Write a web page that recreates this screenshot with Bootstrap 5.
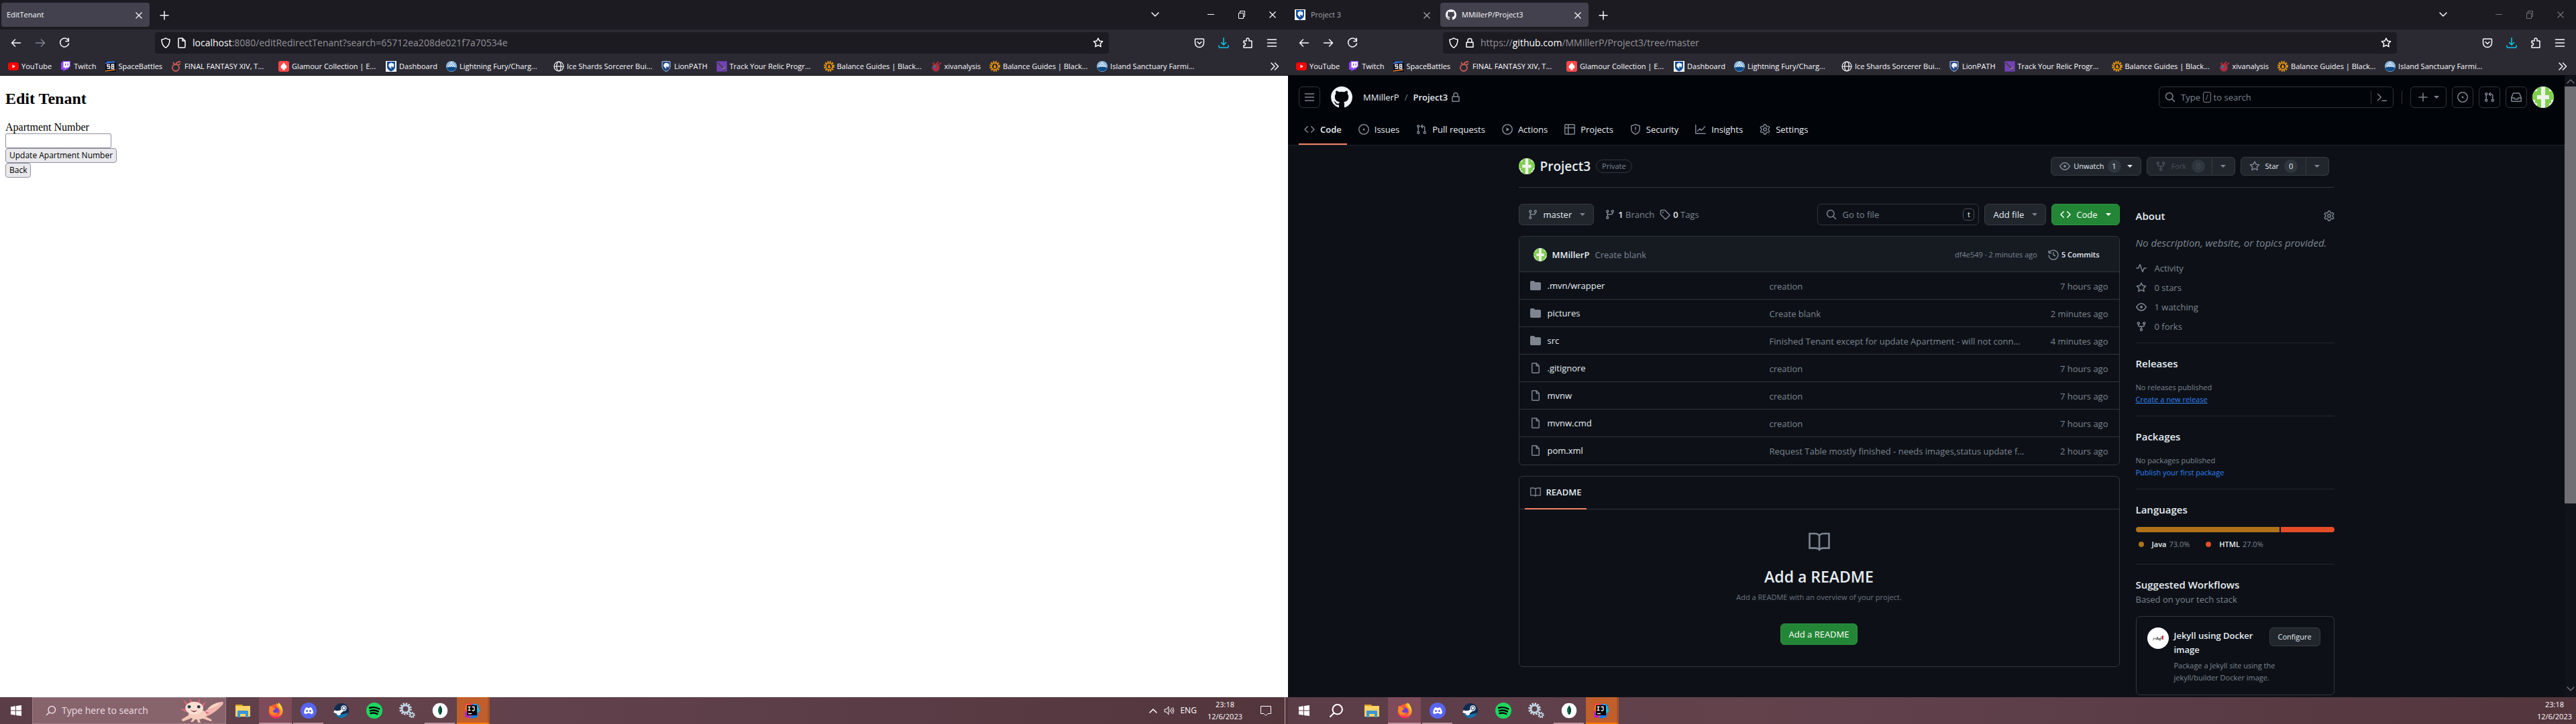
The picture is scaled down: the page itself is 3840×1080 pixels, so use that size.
<!DOCTYPE html>
<html lang="en" data-bs-theme="light">
<head>
<meta charset="utf-8">
<meta name="viewport" content="width=device-width, initial-scale=1">
<title>Desktop</title>
<link rel="stylesheet" href="https://cdn.jsdelivr.net/npm/bootstrap@5.3.0/dist/css/bootstrap.min.css">
<script src="https://cdn.jsdelivr.net/npm/bootstrap@5.3.0/dist/js/bootstrap.bundle.min.js"></script>
<style>
:root{--line:#30363d;--muted:#7d8590;--fg:#e6edf3;--page:#0d1117}
body{font-family:"Open Sans","Noto Sans",sans-serif;font-size:13px;line-height:20px;background:#0d1117}
.ic{width:16px;height:16px;flex:none;fill:currentColor;stroke:none}
.ln{fill:none;stroke:currentColor;stroke-width:1.5;stroke-linecap:round;stroke-linejoin:round}
.flip-y{transform:scaleY(-1)}
.flip-x{transform:scaleX(-1)}
a{text-decoration:none;color:inherit}
button{font:inherit;color:inherit;background:none;border:0;padding:0}
.screen{height:100vh;min-width:0;overflow:hidden}
.screen+.screen .winctl{color:#737278}
/* browser window */
.tabstrip{height:44px;flex:none;background:#1c1b22;color:#fbfbfe;padding-left:2px;padding-right:15px;font-size:11px}
.tab-item{width:221px;height:36px;padding:0 8px;border-radius:4px;margin-right:4px}
.tab-item.current{background:#42414d}
.tab-item.idle{color:#a7a6ad}
.newtab{width:36px;height:36px}
.winctl{gap:30px;margin-left:67px}
.toolbar-row{height:40px;flex:none;background:#2b2a33;color:#fbfbfe;padding:0 16px}
.navbtns,.extras{gap:20px}
.urlbar{background:#1c1b22;border-radius:4px;height:32px;flex:1;padding:0 8px;font-size:14px;color:#94939a;margin:0 127px}
.urlbar b{font-weight:400;color:#fbfbfe}
.marks-row{height:29px;flex:none;background:#2b2a33;color:#fbfbfe;font-size:11px;padding:2px 12px 0;border-bottom:1px solid #0c0c0d}
.bm{padding-right:13px;white-space:nowrap}
.bm.wide{width:160px}
.bm .ic{margin-right:4px}
/* tenant form page */
.tenant{background:#fff;color:#000;font-family:"Liberation Serif",serif;font-size:16px;line-height:18px;padding:20px 8px}
.tenant h2{font-size:24px;line-height:28px;font-weight:700;margin:0 0 20px}
.tenant input{width:158px;height:22px;border:1px solid #8f8f9d;border-radius:2px;padding:0 4px;font-size:13px}
.tenant button{height:22px;border:1px solid #8f8f9d;border-radius:4px;background:#e9e9ed;font:12px/18px "Open Sans",sans-serif;padding:0 5px}
/* repository page */
.gh{background:var(--page);color:var(--fg);overflow:hidden}
.ghtop{background:#010409;border-bottom:1px solid #21262d;padding:16px 16px 0}
.sqbtn{width:32px;height:32px;border:1px solid var(--line);border-radius:6px;color:var(--muted);display:inline-flex;align-items:center;justify-content:center}
.sqbtn.plus{width:54px;gap:8px}
.avatar-pic{border-radius:50%;flex:none}
.searchbox{width:350px;height:32px;border:1px solid var(--line);border-radius:6px;color:var(--muted);padding:0 8px}
.slash{border:1px solid var(--muted);border-radius:3px;line-height:14px;padding:0 3px;font-size:10px;margin:0 4px}
.vr-line{width:1px;height:20px;background:var(--line)}
.vr-line.apart{margin:0 12px}
.caret{border:4px solid transparent;border-top-color:currentColor;border-bottom:0;flex:none}
.caret.dim{color:var(--muted)}
.repotabs{gap:9px;margin-top:17px}
.repotabs a{height:38px;padding:0 8px 6px;gap:8px;display:flex;align-items:center;border-bottom:2px solid transparent}
.repotabs a.current{border-color:#f78166;font-weight:600}
.repotabs .ic{color:var(--muted)}
.wrapcol{max-width:1280px;padding:0 32px;margin:0 auto}
.repohead{height:63px;padding:0 8px 0 0;border-bottom:1px solid var(--line)}
.repohead h1{font-size:19px;line-height:30px;font-weight:600;margin:0 8px}
.pill{border:1px solid var(--line);border-radius:10px;font-size:11px;line-height:18px;padding:0 8px;color:var(--muted)}
.gbtn{display:inline-flex;align-items:center;background:#21262d;border:1px solid #363b42;border-radius:6px;height:32px;padding:0 12px;white-space:nowrap;gap:8px;font-weight:500}
.gbtn.small-h{height:28px;font-size:11px;padding:0 12px}
.gbtn.tight{gap:5px}
.gbtn .ic{color:var(--muted)}
.gbtn.green{background:#238636;border-color:#2f9142;color:#fff}
.gbtn.green .ic{color:#fff}
.num{background:#30363d;border-radius:10px;min-width:20px;height:20px;text-align:center}
.off,.off .ic{color:#484f58}
.gbtn.splitl{border-radius:6px 0 0 6px;width:98px}
.gbtn.splitr{border-radius:0 6px 6px 0;border-left:0;width:34px}
.muted-t{color:var(--muted)}
.fine{font-size:11px}
.gofile{width:241px;height:32px;border:1px solid var(--line);border-radius:6px;padding:0 6px 0 12px;color:var(--muted)}
.gofile input{background:none;border:0;outline:0;flex:1;min-width:0;font-size:13px;color:var(--fg);padding:0 8px}
.gofile input::placeholder{color:var(--muted);opacity:1}
.keycap{border:1px solid #484f58;border-radius:5px;width:17px;height:18px;line-height:15px;text-align:center;font-size:11px;color:var(--fg)}
.boxed{border:1px solid var(--line);border-radius:6px}
.side{width:296px;flex:none}
.filetable{width:100%;table-layout:fixed}
.filetable .c-name{width:373px}
.filetable .c-age{width:140px}
.filetable td{height:41px;border-top:1px solid var(--line);padding:2px 0 0;vertical-align:middle;white-space:nowrap;overflow:hidden}
.filetable .ic{color:var(--muted);margin:0 10px 4px 16px}
.commitbar{height:52px;background:#161b22;border-radius:6px 6px 0 0;padding:2px 29px 0 21px}
.boxtab{height:49px;border-bottom:1px solid var(--line);padding-left:8px}
.boxtab a{height:49px;border-bottom:2px solid #f78166;padding:0 8px;gap:8px;font-weight:600}
.noreadme{padding:32px 0}
.noreadme h3{font-size:23px;line-height:36px;font-weight:600;margin:18px 0 4px}
.noreadme p{font-size:11px;line-height:18px;color:#6e7681;margin:0 0 30px}
.side h2{font-size:15px;line-height:24px;font-weight:600;margin:0}
.abouthead{height:36px}
.aboutdesc{font-size:15px;line-height:24px;margin:10px 0 11px}
.facts{margin:0 0 10px}
.facts li{height:29px;gap:12px}
.side section{border-top:1px solid #21262d;padding:18px 0 15px}
.side section p{font-size:11px;line-height:18px;margin:0;color:var(--muted)}
.side h2.spaced,.basedon{margin-bottom:15px}
.side .bl{color:#2f81f7}
.bar{height:8px;gap:2px;border-radius:6px;overflow:hidden;margin:14px 0 8px}
.dot{width:8px;height:8px;border-radius:50%}
.java{background:#b07219}
.html5{background:#e34c26}
.flow h4{font-size:13px;line-height:21px;width:142px;padding-top:2px;font-weight:600;margin:0}
.scroller{width:17px;background:#10131a;flex:none;color:#6f6f74}
.scroller .thumb{height:622px;background:#6f6f74}
/* taskbar */
.taskbar{height:40px;background:linear-gradient(90deg,#5b3d47,#63424c 35%,#5c3e49 60%,#53353c);color:#fff;flex:none}
.start{width:48px;height:40px}
.winsearch{width:289px;height:40px;background:#87636c;border:1px solid #9d7f87;font-size:14px;padding-left:19px;color:#ecdfe2}
.app{width:49px;height:40px;border-bottom:2px solid transparent;padding-top:2px}
.app .ic{width:24px;height:24px}
.app.run{border-image:linear-gradient(90deg,transparent 4px,#bb929b 4px,#bb929b 45px,transparent 45px) 2}
.app.active{background:#7d4b59;border-bottom-color:#bb929b}
.app.ij{background:#c05f2b;border-bottom-color:#ff7b00;border-right:3px solid #a65228;margin-left:1px}
.tray{gap:8px;font-size:12px}
.clock{font-size:11px;line-height:18px;text-align:center;margin:0 18px 0 8px}
.clock.last{margin-right:6px}
.showdesk{border-left:1px solid #b7a2a7;height:40px;width:5px;margin-left:11px}
</style>
</head>
<body>
<svg width="0" height="0" class="d-none" aria-hidden="true">
<symbol id="code" viewBox="0 0 16 16"><path d="m11.28 3.22 4.25 4.25a.75.75 0 0 1 0 1.06l-4.25 4.25a.749.749 0 0 1-1.275-.326.749.749 0 0 1 .215-.734L13.94 8l-3.72-3.72a.749.749 0 0 1 .326-1.275.749.749 0 0 1 .734.215Zm-6.56 0a.751.751 0 0 1 1.042.018.751.751 0 0 1 .018 1.042L2.06 8l3.72 3.72a.749.749 0 0 1-.326 1.275.749.749 0 0 1-.734-.215L.47 8.53a.75.75 0 0 1 0-1.06Z"/></symbol>
<symbol id="gh" viewBox="0 0 16 16"><path d="M8 0c4.42 0 8 3.58 8 8a8.013 8.013 0 0 1-5.45 7.59c-.4.08-.55-.17-.55-.38 0-.27.01-1.13.01-2.2 0-.75-.25-1.23-.54-1.48 1.78-.2 3.65-.88 3.65-3.95 0-.88-.31-1.59-.82-2.15.08-.2.36-1.02-.08-2.12 0 0-.67-.22-2.2.82-.64-.18-1.32-.27-2-.27-.68 0-1.36.09-2 .27-1.53-1.03-2.2-.82-2.2-.82-.44 1.1-.16 1.92-.08 2.12-.51.56-.82 1.28-.82 2.15 0 3.06 1.86 3.75 3.64 3.95-.23.2-.44.55-.51 1.07-.46.21-1.61.55-2.33-.66-.15-.24-.6-.83-1.23-.82-.67.01-.27.38.01.53.34.19.73.9.82 1.13.16.45.68 1.31 2.69.94 0 .67.01 1.3.01 1.49 0 .21-.15.45-.55.38A7.995 7.995 0 0 1 0 8c0-4.42 3.58-8 8-8Z"/></symbol>
<symbol id="gear" viewBox="0 0 16 16"><path d="M8 0a8.2 8.2 0 0 1 .701.031C9.444.095 9.99.645 10.16 1.29l.288 1.107c.018.066.079.158.212.224.231.114.454.243.668.386.123.082.233.09.299.071l1.103-.303c.644-.176 1.392.021 1.82.63.27.385.506.792.704 1.218.315.675.111 1.422-.364 1.891l-.814.806c-.049.048-.098.147-.088.294.016.257.016.515 0 .772-.01.147.038.246.088.294l.814.806c.475.469.679 1.216.364 1.891a7.977 7.977 0 0 1-.704 1.217c-.428.61-1.176.807-1.82.63l-1.102-.302c-.067-.019-.177-.011-.3.071a5.909 5.909 0 0 1-.668.386c-.133.066-.194.158-.211.224l-.29 1.106c-.168.646-.715 1.196-1.458 1.26a8.006 8.006 0 0 1-1.402 0c-.743-.064-1.289-.614-1.458-1.26l-.289-1.106c-.018-.066-.079-.158-.212-.224a5.738 5.738 0 0 1-.668-.386c-.123-.082-.233-.09-.299-.071l-1.103.303c-.644.176-1.392-.021-1.82-.63a8.12 8.12 0 0 1-.704-1.218c-.315-.675-.111-1.422.363-1.891l.815-.806c.05-.048.098-.147.088-.294a6.214 6.214 0 0 1 0-.772c.01-.147-.038-.246-.088-.294l-.815-.806C.635 6.045.431 5.298.746 4.623a7.92 7.92 0 0 1 .704-1.217c.428-.61 1.176-.807 1.82-.63l1.102.302c.067.019.177.011.3-.071.214-.143.437-.272.668-.386.133-.066.194-.158.211-.224l.29-1.106C6.009.645 6.556.095 7.299.03 7.53.01 7.764 0 8 0Zm-.571 1.525c-.036.003-.108.036-.137.146l-.289 1.105c-.147.561-.549.967-.998 1.189-.173.086-.34.183-.5.29-.417.278-.97.423-1.529.27l-1.103-.303c-.109-.03-.175.016-.195.045-.22.312-.412.644-.573.99-.014.031-.021.11.059.19l.815.806c.411.406.562.957.53 1.456a4.709 4.709 0 0 0 0 .582c.032.499-.119 1.05-.53 1.456l-.815.806c-.081.08-.073.159-.059.19.162.346.353.677.573.989.02.03.085.076.195.046l1.102-.303c.56-.153 1.113-.008 1.53.27.161.107.328.204.501.29.447.222.85.629.997 1.189l.289 1.105c.029.109.101.143.137.146a6.6 6.6 0 0 0 1.142 0c.036-.003.108-.036.137-.146l.289-1.105c.147-.561.549-.967.998-1.189.173-.086.34-.183.5-.29.417-.278.97-.423 1.529-.27l1.103.303c.109.029.175-.016.195-.045.22-.313.411-.644.573-.99.014-.031.021-.11-.059-.19l-.815-.806c-.411-.406-.562-.957-.53-1.456a4.709 4.709 0 0 0 0-.582c-.032-.499.119-1.05.53-1.456l.815-.806c.081-.08.073-.159.059-.19a6.464 6.464 0 0 0-.573-.989c-.02-.03-.085-.076-.195-.046l-1.102.303c-.56.153-1.113.008-1.53-.27a4.44 4.44 0 0 0-.501-.29c-.447-.222-.85-.629-.997-1.189l-.289-1.105c-.029-.11-.101-.143-.137-.146a6.6 6.6 0 0 0-1.142 0ZM11 8a3 3 0 1 1-6 0 3 3 0 0 1 6 0ZM9.5 8a1.5 1.5 0 1 0-3.001.001A1.5 1.5 0 0 0 9.5 8Z"/></symbol>
<symbol id="star" viewBox="0 0 16 16"><path d="M8 .25a.75.75 0 0 1 .673.418l1.882 3.815 4.21.612a.75.75 0 0 1 .416 1.279l-3.046 2.97.719 4.192a.751.751 0 0 1-1.088.791L8 12.347l-3.766 1.98a.75.75 0 0 1-1.088-.79l.72-4.194L.818 6.374a.75.75 0 0 1 .416-1.28l4.21-.611L7.327.668A.75.75 0 0 1 8 .25Zm0 2.445L6.615 5.5a.75.75 0 0 1-.564.41l-3.097.45 2.24 2.184a.75.75 0 0 1 .216.664l-.528 3.084 2.769-1.456a.75.75 0 0 1 .698 0l2.77 1.456-.53-3.084a.75.75 0 0 1 .216-.664l2.24-2.183-3.096-.45a.75.75 0 0 1-.564-.41L8 2.694Z"/></symbol>
<symbol id="folder" viewBox="0 0 16 16"><path d="M1.75 1A1.75 1.75 0 0 0 0 2.75v10.5C0 14.216.784 15 1.75 15h12.5A1.75 1.75 0 0 0 16 13.25v-8.5A1.75 1.75 0 0 0 14.25 3H7.5a.25.25 0 0 1-.2-.1l-.9-1.2C6.07 1.26 5.55 1 5 1H1.75Z"/></symbol>
<symbol id="file" viewBox="0 0 16 16"><path class="ln" d="M3.75.75h5.5l4 4v9.5a1 1 0 0 1-1 1h-8.5a1 1 0 0 1-1-1V1.75a1 1 0 0 1 1-1ZM9.25 1v3.75h3.75"/></symbol>
<symbol id="issue" viewBox="0 0 16 16"><circle class="ln" cx="8" cy="8" r="7.25"/><circle cx="8" cy="8" r="1.5"/></symbol>
<symbol id="pr" viewBox="0 0 16 16"><g class="ln"><circle cx="3.25" cy="3.25" r="1.5"/><circle cx="3.25" cy="12.75" r="1.5"/><circle cx="12.75" cy="12.75" r="1.5"/><path d="M3.25 5v6M12.75 11V5.5a2 2 0 0 0-2-2H7.5M9.5 1.2 7.2 3.5l2.3 2.3"/></g></symbol>
<symbol id="play" viewBox="0 0 16 16"><circle class="ln" cx="8" cy="8" r="7.25"/><path d="M6.4 5v6l4.800-3z"/></symbol>
<symbol id="project" viewBox="0 0 16 16"><path class="ln" d="M.75 1.75a1 1 0 0 1 1-1h12.500a1 1 0 0 1 1 1v12.500a1 1 0 0 1-1 1H1.750a1 1 0 0 1-1-1ZM.75 5.750h14.500M5.750.75v14.500"/></symbol>
<symbol id="shield" viewBox="0 0 16 16"><path class="ln" d="M8 .8 14.200 2.700V7.500c0 3.700-2.200 6.200-6.200 7.700C4 13.700 1.800 11.200 1.800 7.500V2.700ZM8 4.700v3.500M8 11v.1"/></symbol>
<symbol id="graph" viewBox="0 0 16 16"><path class="ln" d="M.75 1.500v12.750h14.500M3.500 10.500 7 7l2.500 2.500L14.500 4"/></symbol>
<symbol id="lock" viewBox="0 0 16 16"><path class="ln" d="M3 7.250h10v7H3ZM5 7V4.500a3 3 0 0 1 6 0V7"/></symbol>
<symbol id="menu" viewBox="0 0 16 16"><path class="ln" d="M1.500 3h13M1.500 8h13M1.500 13h13"/></symbol>
<symbol id="search" viewBox="0 0 16 16"><path class="ln" d="M12 6.750a5.250 5.250 0 1 1-10.500 0 5.250 5.250 0 0 1 10.500 0ZM10.700 10.700 14.500 14.500"/></symbol>
<symbol id="term" viewBox="0 0 16 16"><path class="ln" d="M1.500 3.200 6.300 8l-4.800 4.800M8 13.200h6.500"/></symbol>
<symbol id="plus" viewBox="0 0 16 16"><path class="ln" d="M8 2v12M2 8h12"/></symbol>
<symbol id="inbox" viewBox="0 0 16 16"><path class="ln" d="M3.500 2h9l2.700 6.500v5a.8.8 0 0 1-.8.8H1.600a.8.8 0 0 1-.8-.8v-5ZM1 9h3.800l1.200 2h4l1.200-2H15"/></symbol>
<symbol id="eye" viewBox="0 0 16 16"><path class="ln" d="M.75 8C3 4.300 5.400 2.750 8 2.750S13 4.300 15.250 8C13 11.700 10.600 13.250 8 13.250S3 11.700.75 8Z"/><circle cx="8" cy="8" r="2"/></symbol>
<symbol id="fork" viewBox="0 0 16 16"><g class="ln"><circle cx="3.750" cy="3.250" r="1.500"/><circle cx="12.250" cy="3.250" r="1.500"/><circle cx="8" cy="12.750" r="1.500"/><path d="M3.750 5v1.500a1.500 1.500 0 0 0 1.500 1.500h5.500a1.500 1.500 0 0 0 1.500-1.500V5M8 8v3"/></g></symbol>
<symbol id="branch" viewBox="0 0 16 16"><g class="ln"><circle cx="4.250" cy="3.250" r="1.500"/><circle cx="4.250" cy="12.750" r="1.500"/><circle cx="11.750" cy="3.250" r="1.500"/><path d="M4.250 5v6M11.750 5v.8a2 2 0 0 1-2 2H6.250a2 2 0 0 0-2 2"/></g></symbol>
<symbol id="tag" viewBox="0 0 16 16"><path class="ln" d="M1.500 2.500v5.300l6.700 6.700a1 1 0 0 0 1.400 0l4.900-4.900a1 1 0 0 0 0-1.400L7.800 1.500H2.500a1 1 0 0 0-1 1Z"/><circle cx="5" cy="5" r="1.100"/></symbol>
<symbol id="history" viewBox="0 0 16 16"><path class="ln" d="M1.200 2v3.500h3.500M1.500 5.500A7 7 0 1 1 1 9M8 4.500V8l2.500 1.500"/></symbol>
<symbol id="book" viewBox="0 0 16 16"><path fill="none" stroke="currentColor" stroke-width="1.300" d="M.75 2h4.500C6.700 2 8 3 8 4.200 8 3 9.300 2 10.750 2h4.500v10.800h-4.500C9.300 12.800 8.500 13.300 8 14c-.5-.7-1.300-1.200-2.750-1.200H.75ZM8 4v10"/></symbol>
<symbol id="pulse" viewBox="0 0 16 16"><path class="ln" d="M.75 8h3L6 2.500l4 11L12.200 8h3"/></symbol>
<symbol id="back" viewBox="0 0 16 16"><path class="ln" d="M14.500 8H1.500M6.500 3l-5 5 5 5"/></symbol>
<symbol id="fwd" viewBox="0 0 16 16"><path class="ln" d="M1.500 8h13M9.500 3l5 5-5 5"/></symbol>
<symbol id="reload" viewBox="0 0 16 16"><path class="ln" d="M14 4.500A6.500 6.500 0 1 0 14.500 9M14.300 1v4.500H9.800"/></symbol>
<symbol id="ffshield" viewBox="0 0 16 16"><path class="ln" d="M8 .8c2 1.400 4 2 6 2.200 0 5.500-1.500 9.500-6 12.200C3.500 12.500 2 8.500 2 3c2-.2 4-.8 6-2.200Z"/></symbol>
<symbol id="page" viewBox="0 0 16 16"><path class="ln" d="M4 1h5l4 4v9a1 1 0 0 1-1 1H4a1 1 0 0 1-1-1V2a1 1 0 0 1 1-1ZM9 1v4h4"/></symbol>
<symbol id="pocket" viewBox="0 0 16 16"><path class="ln" d="M2.500 2h11a1 1 0 0 1 1 1v5c0 4-3 6.500-6.500 6.500S1.500 12 1.500 8V3a1 1 0 0 1 1-1ZM5 6.500l3 3 3-3"/></symbol>
<symbol id="dl" viewBox="0 0 16 16"><path class="ln" d="M8 .8V11M4.500 7.500 8 11l3.500-3.500M1 12v1.500A1.500 1.500 0 0 0 2.500 15h11a1.500 1.500 0 0 0 1.500-1.500V12"/></symbol>
<symbol id="ext" viewBox="0 0 16 16"><path class="ln" d="M2 5h4V3a2 2 0 0 1 4 0v2h4v10H2v-3.500h1.500a2 2 0 0 0 0-3.500H2Z"/></symbol>
<symbol id="x" viewBox="0 0 16 16"><path fill="none" stroke="currentColor" stroke-width="1.200" d="M3.500 3.500l9 9M12.500 3.500l-9 9"/></symbol>
<symbol id="chev" viewBox="0 0 16 16"><path class="ln" d="M3 5l5 5 5-5"/></symbol>
<symbol id="min" viewBox="0 0 16 16"><path stroke="currentColor" d="M3 7.500h10"/></symbol>
<symbol id="restore" viewBox="0 0 16 16"><path fill="none" stroke="currentColor" d="M3.500 5.500h7v8h-7ZM5.500 5V2.500h7v8H11"/></symbol>
<symbol id="more" viewBox="0 0 16 16"><path class="ln" d="M3 3l5 5-5 5M8.500 3l5 5-5 5"/></symbol>
<symbol id="avatar" viewBox="0 0 32 32"><rect width="32" height="32" fill="#f0f0f0"/><path fill="#7ed04b" d="M7 0h6v13H7v-1H1V7h6ZM25 0h-6v13h6v-1h6V7h-6ZM0 12h7v8H0ZM32 12h-7v8h7ZM7 32h6V19H7v1H4v5h3ZM25 32h-6V19h6v1h3v5h-3Z"/></symbol>
<symbol id="yt" viewBox="0 0 16 16"><rect y="2" width="16" height="12" rx="3.500" fill="#f00"/><path fill="#fff" d="M6.500 5.500v5L11 8z"/></symbol>
<symbol id="tw" viewBox="0 0 16 16"><path fill="#9146ff" d="M4 0 1 3v10h3.500v3l3-3H10l5-5V0Z"/><path fill="#fff" d="M4.500 1.200h9.300v6.300L11.500 9.800H9L7 11.800V9.800H4.500Z"/><path fill="#9146ff" d="M7 3.500h1.300V7H7zM10.500 3.500h1.300V7h-1.300z"/></symbol>
<symbol id="sb" viewBox="0 0 16 16"><rect width="16" height="16" fill="#080c18"/><path stroke="#3b6fd0" stroke-width="2" d="M0 3.500 12 1M2 1.500h13"/><path stroke="#f08020" stroke-width="1.500" d="M0 15l15-2"/><path fill="none" stroke="#eee" stroke-width="1.500" d="M7 5.500H3v2.500h3.500v3H2.500M9.500 5v6.500h3v-6.500ZM9.500 8h3"/></symbol>
<symbol id="fx" viewBox="0 0 16 16"><g fill="none" stroke="#cc5c52" stroke-width="1.800"><circle cx="7" cy="10" r="5"/><path d="M7 5C8 2 11 1 14 1M5 5 3 2M10 6l4-2"/></g></symbol>
<symbol id="ez" viewBox="0 0 16 16"><rect width="16" height="16" rx="3" fill="#ff4747"/><path fill="#fff" d="M8 2.500 11 6c3 2.500 1 6-2 5.500l1 2H6l1-2C4 12 2 8.500 5 6Z"/></symbol>
<symbol id="lion" viewBox="0 0 16 16"><path fill="#1e407c" stroke="#b9cbe8" d="M2 1c4-.7 8-.7 12 0v7c0 4-2.500 6-6 7.500C4.500 14 2 12 2 8Z"/><path fill="#e9f1fb" d="M5 4l3-1.500L12 4l.5 3-1.500 3-1.500-2L8 9l.5 3-3-2.500L4 7Z"/></symbol>
<symbol id="dash" viewBox="0 0 16 16"><rect width="16" height="16" fill="#fff"/><path fill="#0f4b99" d="M2 1h12v7c0 4-2.500 6-6 7.500C4.500 14 2 12 2 8Z"/><path fill="#e9f1fb" d="M5 4l3-1.500L12 4l.5 3-1.500 3-1.500-2L8 9l.5 3-3-2.500L4 7Z"/></symbol>
<symbol id="orb" viewBox="0 0 16 16"><circle cx="8" cy="8" r="8" fill="#8fb9dd"/><path fill="#0c4a87" d="M.5 10c5-2 10-2 15 0A8 8 0 0 1 .5 10Z"/><path fill="none" stroke="#fff" d="M3 9 8 2l5 7M6 9l2-3 2 3"/></symbol>
<symbol id="globe" viewBox="0 0 16 16"><g fill="none" stroke="currentColor" stroke-width="1.200"><circle cx="8" cy="8" r="7"/><ellipse cx="8" cy="8" rx="3.200" ry="7"/><path d="M1 8h14"/></g></symbol>
<symbol id="sword" viewBox="0 0 16 16"><rect width="16" height="16" fill="#5b3596"/><rect x="1" y="1" width="14" height="14" fill="#7343b3"/><path stroke="#45434d" stroke-width="2" d="M2 2l11 12"/><path stroke="#8b8697" stroke-width="1.500" d="M9 12l4-2"/></symbol>
<symbol id="cog" viewBox="0 0 16 16"><circle cx="8" cy="8" r="6.500" fill="none" stroke="#e8940c" stroke-width="3" stroke-dasharray="2 1.400"/><circle cx="8" cy="8" r="5" fill="none" stroke="#e8940c" stroke-width="1.500"/><path fill="#e8940c" d="M8 4.500 10 9a2 2 0 1 1-4 0Z"/></symbol>
<symbol id="xiv" viewBox="0 0 16 16"><circle cx="7" cy="10" r="5.800" fill="#ae2d3c"/><path stroke="#ae2d3c" stroke-width="2" d="M7 5 11 1M10 6l5-3M4 6 3 2"/><circle cx="4.500" cy="9" r="2" fill="#2c5fc4"/><path fill="#2e9a57" d="M4 6l3 1-1 3Z"/></symbol>
<symbol id="win" viewBox="0 0 16 16"><path fill="#fff" d="M0 2.200 7 1.200V7.500H0ZM8 1 16 0v7.500H8ZM0 8.500h7v6.300l-7-1ZM8 8.500h8V16l-8-1.100Z"/></symbol>
<symbol id="explorer" viewBox="0 0 24 24"><path fill="#e0a21a" d="M1 3h10l2 3H1Z"/><path fill="#ffd464" d="M1 5h22v16H1Z"/><path fill="#3b96d8" d="M4 13a1 1 0 0 1 1-1h14a1 1 0 0 1 1 1v9h-4v-5H8v5H4Z"/></symbol>
<symbol id="firefox" viewBox="0 0 24 24"><circle cx="12" cy="13" r="10.500" fill="#ff5a36"/><path fill="#ff9a1f" d="M13 1c5 2 10 7 9.500 13-1 5-5 8-9 8 6-4 6-9 3-13-2-2-4-4-3.500-8Z"/><path fill="#ffd83a" d="M16 0c4 3 7 8 6 14-1-4-3-5-5-8-1-2-2-3-1-6Z"/><circle cx="12" cy="12.500" r="5" fill="#7140d0"/><path fill="#ff8a26" d="M3 5c2 0 4 1 5 3l4 1c-2 2-4 2-4 4 1 3 5 3 7 1-1 5-9 6-12 1-1-3-1-7 0-10Z"/><path fill="#f0246e" d="M2 15c2 7 13 9 19 2-4 9-17 9-19-2Z"/></symbol>
<symbol id="discord" viewBox="0 0 24 24"><circle cx="12" cy="12" r="12" fill="#5865f2"/><path fill="#fff" d="M8 7.500 10 7l.5 1h3l.5-1 2 .5c2 2.500 3 5.500 2.800 8.500L15.500 17.500l-1-1.500h-5l-1 1.500L5.200 16C5 13 6 10 8 7.500Z"/><circle cx="9.500" cy="12.500" r="1.500" fill="#5865f2"/><circle cx="14.500" cy="12.500" r="1.500" fill="#5865f2"/></symbol>
<symbol id="steam" viewBox="0 0 24 24"><circle cx="12" cy="12" r="11" fill="#122c50"/><path fill="#1b72a8" d="M2 16c5 3 12 2 20-1-2 10-17 11-20 1Z"/><path stroke="#fff" stroke-width="4" d="M1 13l7 3 6-5"/><circle cx="15.500" cy="8.500" r="4.200" fill="#fff"/><circle cx="15.500" cy="8.500" r="2.500" fill="#fff" stroke="#122c50"/><circle cx="8" cy="16" r="3" fill="#fff"/></symbol>
<symbol id="spotify" viewBox="0 0 24 24"><circle cx="12" cy="12" r="12" fill="#1ed760"/><path fill="none" stroke="#000" stroke-width="2.400" stroke-linecap="round" d="M5 8c5-1.500 10-1 14.500 1.500M6 12.200c4-1.200 8.500-.8 12 1.200M6.500 16c3.500-.9 7-.5 10 1"/></symbol>
<symbol id="gears" viewBox="0 0 24 24"><circle cx="9.500" cy="9.500" r="5.500" fill="none" stroke="#b9d4e6" stroke-width="3"/><circle cx="9.500" cy="9.500" r="8" fill="none" stroke="#dcecf5" stroke-width="2.500" stroke-dasharray="2.200 2"/><circle cx="19" cy="18.500" r="2.500" fill="none" stroke="#b9d4e6" stroke-width="1.500"/><circle cx="19" cy="18.500" r="4" fill="none" stroke="#dcecf5" stroke-width="1.500" stroke-dasharray="1.600 1.500"/></symbol>
<symbol id="mongo" viewBox="0 0 24 24"><circle cx="12" cy="12" r="11.200" fill="#fff"/><path fill="#0b6b4a" d="M12 4.500c4 4.500 4 10 0 14-4-4-4-9.500 0-14Z"/><path fill="#083f34" d="M12 4.500c4 4.500 4 10 0 14Z"/></symbol>
<symbol id="ij" viewBox="0 0 24 24"><path fill="#fe315d" d="M1 2l10-1 6 6-9 14-6 2-1-8Z"/><path fill="#f97a12" d="M1 10 3 2l6 2-2 12Z"/><path fill="#087cfa" d="M12 2l9 1 2 7-4 12-9 2Z"/><path fill="#07c3f2" d="M15 1l6 4 2 8-3 3Z"/><path fill="#b01fe0" d="M1 14l5 2 3 7-7-1Z"/><rect x="4" y="4" width="15" height="15" fill="#000"/><path fill="none" stroke="#fff" stroke-width="1.300" d="M5.500 6.500h4M7.500 6.500v5M5.500 11.500h4M11.500 6.500h3.500v4a1.200 1.200 0 0 1-3 .5M6 16.500h5"/></symbol>
<symbol id="axolotl" viewBox="0 0 70 40"><path fill="#f3b6ad" d="M38 22C46 18 50 8 66 6c4 0 3 4 0 6-7 8-16 14-26 18Z"/><path fill="#f7d6c8" d="M44 17c6-6 12-9 20-9-5 5-11 8-20 9Z"/><g fill="#e0647f"><path d="M11 13 5 2l9 8ZM17 8l-2-8 7 8ZM27 9l5-9-1 11ZM33 12l9-7-6 11ZM10 18 0 17l9 5ZM37 20l10 4-10 2Z"/></g><path fill="#f4c4b4" d="M14 27 3 34l2 3 13-5ZM22 30l-5 8h4l6-7ZM38 28l12 6v3l-15-5ZM30 31l3 8h-4l-3-8Z"/><ellipse cx="28" cy="26" rx="14" ry="8" fill="#f4cdbd"/><ellipse cx="23" cy="16" rx="14" ry="10" fill="#fbe0d2"/><circle cx="15" cy="14" r="2.500" fill="#263747"/><circle cx="30" cy="14" r="2.500" fill="#263747"/><path fill="#8b3b3b" d="M17 19q6 3 11 0-5 7-11 0Z"/></symbol>
</svg>

<div class="d-flex">
<!-- left monitor -->
<div class="screen d-flex flex-column w-50">
 <div class="tabstrip d-flex align-items-center">
  <div class="tab-item current d-flex align-items-center"><span class="flex-grow-1">EditTenant</span><button aria-label="Close tab"><svg class="ic"><use href="#x"/></svg></button></div>
  <button class="newtab" aria-label="New tab"><svg class="ic"><use href="#plus"/></svg></button>
  <div class="ms-auto d-flex align-items-center"><svg class="ic"><use href="#chev"/></svg><span class="winctl d-flex"><svg class="ic"><use href="#min"/></svg><svg class="ic"><use href="#restore"/></svg><svg class="ic"><use href="#x"/></svg></span></div>
 </div>
 <div class="toolbar-row d-flex align-items-center">
  <div class="navbtns d-flex"><svg class="ic"><use href="#back"/></svg><svg class="ic muted-t"><use href="#fwd"/></svg><svg class="ic"><use href="#reload"/></svg></div>
  <div class="urlbar d-flex align-items-center"><svg class="ic text-white"><use href="#ffshield"/></svg><svg class="ic text-white ms-2 me-2 ps-0"><use href="#page"/></svg><span class="flex-grow-1 text-nowrap"><b>localhost</b>:8080/editRedirectTenant?search=65712ea208de021f7a70534e</span><svg class="ic text-white"><use href="#star"/></svg></div>
  <div class="d-flex extras"></div>
 </div>
 <nav class="marks-row d-flex align-items-center" aria-label="Bookmarks"></nav>
 <main class="tenant flex-grow-1">
  <h2>Edit Tenant</h2>
  <form class="d-flex flex-column align-items-start">
   <label for="apt">Apartment Number</label>
   <input id="apt" type="text">
   <button type="button">Update Apartment Number</button>
   <button type="button">Back</button>
  </form>
 </main>
 <footer class="taskbar d-flex align-items-center">
  <div class="start d-flex align-items-center ps-3"><svg class="ic"><use href="#win"/></svg></div>
  <div class="winsearch d-flex align-items-center"><svg class="ic flip-x"><use href="#search"/></svg><span class="flex-grow-1 ps-1 ms-1 text-nowrap">Type here to search</span><svg width="70" height="38"><use href="#axolotl"/></svg></div>
  <div class="apps d-flex"></div>
  <div class="tray ms-auto d-flex align-items-center">
   <svg class="ic flip-y"><use href="#chev"/></svg>
   <svg class="ic" viewBox="0 0 16 16"><path fill="none" stroke="currentColor" d="M1 6h3l3-4v12L4 10H1ZM9 6q1.500 2 0 4M11 4q3 4 0 8M13 3q3.500 5 0 10"/></svg>
   <span>ENG</span>
   <div class="clock">23:18<br>12/6/2023</div>
   <svg width="18" height="18" viewBox="0 0 18 18"><path fill="none" stroke="#fff" d="M1.500 2.500h15v11H12l-3 3-3-3H1.500Z"/></svg>
   <span class="showdesk"></span>
  </div>
 </footer>
</div>

<!-- right monitor -->
<div class="screen d-flex flex-column w-50">
 <div class="tabstrip d-flex align-items-center">
  <div class="tab-item idle d-flex align-items-center"><svg class="ic me-2"><use href="#dash"/></svg><span class="flex-grow-1">Project 3</span><button aria-label="Close tab"><svg class="ic"><use href="#x"/></svg></button></div>
  <div class="tab-item current d-flex align-items-center"><svg class="ic me-2"><use href="#gh"/></svg><span class="flex-grow-1">MMillerP/Project3</span><button aria-label="Close tab"><svg class="ic"><use href="#x"/></svg></button></div>
  <button class="newtab" aria-label="New tab"><svg class="ic"><use href="#plus"/></svg></button>
  <div class="ms-auto d-flex align-items-center"><svg class="ic"><use href="#chev"/></svg><span class="winctl d-flex"><svg class="ic"><use href="#min"/></svg><svg class="ic"><use href="#restore"/></svg><svg class="ic"><use href="#x"/></svg></span></div>
 </div>
 <div class="toolbar-row d-flex align-items-center">
  <div class="navbtns d-flex"><svg class="ic"><use href="#back"/></svg><svg class="ic"><use href="#fwd"/></svg><svg class="ic"><use href="#reload"/></svg></div>
  <div class="urlbar d-flex align-items-center"><svg class="ic text-white"><use href="#ffshield"/></svg><svg class="ic text-white ms-2 me-2"><use href="#lock"/></svg><span class="flex-grow-1 text-nowrap">https://<b>github.com</b>/MMillerP/Project3/tree/master</span><svg class="ic text-white"><use href="#star"/></svg></div>
  <div class="d-flex extras"></div>
 </div>
 <nav class="marks-row d-flex align-items-center" aria-label="Bookmarks"></nav>
 <div class="d-flex flex-grow-1 overflow-hidden">
 <div class="gh flex-grow-1">
  <header class="ghtop">
   <div class="d-flex align-items-center">
    <button class="sqbtn" aria-label="Menu"><svg class="ic"><use href="#menu"/></svg></button>
    <svg class="mx-3" width="32" height="32" fill="#f0f6fc"><use href="#gh"/></svg>
    <a href="#">MMillerP</a><span class="mx-2 muted-t">/</span><a href="#" class="fw-semibold">Project3</a><svg class="ic muted-t ms-1"><use href="#lock"/></svg>
    <div class="ms-auto searchbox d-flex align-items-center"><svg class="ic me-2"><use href="#search"/></svg>Type<span class="slash">/</span>to search<span class="vr-line ms-auto me-2"></span><svg class="ic"><use href="#term"/></svg></div>
    <span class="vr-line apart"></span>
    <div class="d-flex gap-2 align-items-center">
     <button class="sqbtn plus" aria-label="Create"><svg class="ic"><use href="#plus"/></svg><i class="caret"></i></button>
     <button class="sqbtn" aria-label="Issues"><svg class="ic"><use href="#issue"/></svg></button>
     <button class="sqbtn" aria-label="Pull requests"><svg class="ic"><use href="#pr"/></svg></button>
     <button class="sqbtn" aria-label="Inbox"><svg class="ic"><use href="#inbox"/></svg></button>
     <svg class="avatar-pic" width="32" height="32"><use href="#avatar"/></svg>
    </div>
   </div>
   <nav class="repotabs d-flex">
    <a href="#" class="current"><svg class="ic"><use href="#code"/></svg>Code</a>
    <a href="#"><svg class="ic"><use href="#issue"/></svg>Issues</a>
    <a href="#"><svg class="ic"><use href="#pr"/></svg>Pull requests</a>
    <a href="#"><svg class="ic"><use href="#play"/></svg>Actions</a>
    <a href="#"><svg class="ic"><use href="#project"/></svg>Projects</a>
    <a href="#"><svg class="ic"><use href="#shield"/></svg>Security</a>
    <a href="#"><svg class="ic"><use href="#graph"/></svg>Insights</a>
    <a href="#"><svg class="ic"><use href="#gear"/></svg>Settings</a>
   </nav>
  </header>
  <div class="wrapcol">
   <div class="repohead d-flex align-items-center">
    <svg class="avatar-pic" width="24" height="24"><use href="#avatar"/></svg><h1>Project3</h1><span class="pill">Private</span>
    <div class="ms-auto d-flex gap-2">
     <button class="gbtn small-h tight"><svg class="ic"><use href="#eye"/></svg><span>Unwatch</span><span class="num">1</span><i class="caret ms-1"></i></button>
     <div class="d-flex"><button class="gbtn small-h splitl off" disabled><svg class="ic"><use href="#fork"/></svg><span>Fork</span><span class="num">0</span></button><button class="gbtn small-h splitr" aria-label="Fork options"><i class="caret dim"></i></button></div>
     <div class="d-flex"><button class="gbtn small-h splitl"><svg class="ic"><use href="#star"/></svg><span>Star</span><span class="num">0</span></button><button class="gbtn small-h splitr" aria-label="Star options"><i class="caret dim"></i></button></div>
    </div>
   </div>
   <div class="d-flex gap-4 pt-4">
    <div class="flex-grow-1">
     <div class="d-flex align-items-center mb-3">
      <button class="gbtn me-3"><svg class="ic"><use href="#branch"/></svg>master<i class="caret dim ms-1"></i></button>
      <svg class="ic muted-t me-1"><use href="#branch"/></svg><a href="#" class="me-2"><b class="fw-semibold">1</b> <span class="muted-t">Branch</span></a>
      <svg class="ic muted-t me-1"><use href="#tag"/></svg><a href="#"><b class="fw-semibold">0</b> <span class="muted-t">Tags</span></a>
      <div class="ms-auto d-flex gap-2">
       <label class="gofile d-flex align-items-center"><svg class="ic"><use href="#search"/></svg><input type="text" placeholder="Go to file" aria-label="Go to file"><span class="keycap">t</span></label>
       <button class="gbtn">Add file<i class="caret dim ms-1"></i></button>
       <button class="gbtn green"><svg class="ic"><use href="#code"/></svg>Code<i class="caret ms-1"></i></button>
      </div>
     </div>
     <div class="boxed mb-3">
      <div class="commitbar d-flex align-items-center"><svg class="avatar-pic me-2" width="20" height="20"><use href="#avatar"/></svg><a href="#" class="fw-semibold me-2">MMillerP</a><span class="muted-t">Create blank</span><span class="ms-auto muted-t me-3 fine">df4e549 · 2 minutes ago</span><svg class="ic muted-t me-1"><use href="#history"/></svg><a href="#" class="fw-semibold fine">5 Commits</a></div>
      <table class="filetable"><colgroup><col class="c-name"><col><col class="c-age"></colgroup><tbody></tbody></table>
     </div>
     <div class="boxed">
      <div class="boxtab d-flex"><a href="#" class="d-flex align-items-center"><svg class="ic muted-t"><use href="#book"/></svg>README</a></div>
      <div class="noreadme d-flex flex-column align-items-center">
       <svg class="muted-t" width="32" height="32"><use href="#book"/></svg>
       <h3>Add a README</h3>
       <p>Add a README with an overview of your project.</p>
       <button class="gbtn green">Add a README</button>
      </div>
     </div>
    </div>
    <aside class="side">
     <div class="abouthead d-flex align-items-center"><h2>About</h2><svg class="ic muted-t ms-auto"><use href="#gear"/></svg></div>
     <p class="aboutdesc fst-italic muted-t text-nowrap">No description, website, or topics provided.</p>
     <ul class="facts list-unstyled muted-t">
      <li class="d-flex align-items-center"><svg class="ic"><use href="#pulse"/></svg>Activity</li>
      <li class="d-flex align-items-center"><svg class="ic"><use href="#star"/></svg>0 stars</li>
      <li class="d-flex align-items-center"><svg class="ic"><use href="#eye"/></svg>1 watching</li>
      <li class="d-flex align-items-center"><svg class="ic"><use href="#fork"/></svg>0 forks</li>
     </ul>
     <section><h2 class="spaced">Releases</h2><p>No releases published</p><p><a href="#" class="bl text-decoration-underline">Create a new release</a></p></section>
     <section><h2 class="spaced">Packages</h2><p>No packages published</p><p><a href="#" class="bl">Publish your first package</a></p></section>
     <section><h2>Languages</h2>
      <div class="bar d-flex"><span class="java" style="width:73%"></span><span class="html5" style="width:27%"></span></div>
      <div class="d-flex align-items-center fine pb-1"><span class="dot java ms-1 me-2"></span><b class="fw-semibold mx-1">Java</b><span class="muted-t me-4">73.0%</span><span class="dot html5 me-2"></span><b class="fw-semibold mx-1">HTML</b><span class="muted-t">27.0%</span></div>
     </section>
     <section><h2>Suggested Workflows</h2><div class="basedon muted-t">Based on your tech stack</div>
      <div class="flow boxed p-3 d-flex">
       <svg width="32" height="32" class="flex-shrink-0 me-2" viewBox="0 0 32 32"><circle cx="16" cy="16" r="16" fill="#fff"/><path fill="none" stroke="#555" stroke-width="1" d="M8 19q2 0 2-4M11 17q3-2 2 1 2 1 2-4v4l2-2M17 16v3q2-1 2-3v4M20 18l1-5M22 18l1-5"/><path stroke="#c00" stroke-width="1.500" d="M23 12v6"/></svg>
       <div><div class="d-flex align-items-start"><h4>Jekyll using Docker image</h4><button class="gbtn small-h">Configure</button></div><p class="mt-1 pe-4">Package a Jekyll site using the jekyll/builder Docker image.</p></div>
      </div>
     </section>
    </aside>
   </div>
  </div>
 </div>
 <div class="scroller d-flex flex-column align-items-center"><svg class="ic flip-y"><use href="#chev"/></svg><div class="thumb w-100"></div><svg class="ic mt-auto mb-1"><use href="#chev"/></svg></div>
 </div>
 <footer class="taskbar d-flex align-items-center">
  <div class="start d-flex align-items-center ps-3"><svg class="ic"><use href="#win"/></svg></div>
  <div class="start d-flex align-items-center justify-content-center"><svg class="flip-x" width="22" height="22"><use href="#search"/></svg></div>
  <div class="apps d-flex ms-1"></div>
  <div class="clock last ms-auto">23:18<br>12/6/2023</div>
 </footer>
</div>
</div>
<script>
const icon=(n,c='')=>`<svg class="ic ${c}"><use href="#${n}"/></svg>`;
const marks=[['yt','YouTube'],['tw','Twitch'],['sb','SpaceBattles'],['fx','FINAL FANTASY XIV, T...',1],['ez','Glamour Collection | E...',1],['dash','Dashboard'],['orb','Lightning Fury/Charg...',1],['globe','Ice Shards Sorcerer Bui...',1],['lion','LionPATH'],['sword','Track Your Relic Progr...',1],['cog','Balance Guides | Black...',1],['xiv','xivanalysis'],['cog','Balance Guides | Black...',1],['orb','Island Sanctuary Farmi...',1]];
document.querySelectorAll('.marks-row').forEach(e=>e.innerHTML=marks.map(([i,t,w])=>`<a href="#" class="bm d-flex align-items-center ${w?'wide':''}">${icon(i)}${t}</a>`).join('')+icon('more','ms-auto'));
document.querySelectorAll('.extras').forEach(e=>{e.innerHTML=icon('pocket')+icon('dl','text-info')+icon('ext')+icon('menu')});
const apps=[['explorer',''],['firefox','active'],['discord','run'],['steam',''],['spotify',''],['gears',''],['mongo','run'],['ij','ij']];
document.querySelectorAll('.apps').forEach(e=>e.innerHTML=apps.map(([i,c])=>`<div class="app d-flex align-items-center justify-content-center ${c}">${icon(i)}</div>`).join(''));
const files=[['folder','.mvn/wrapper','creation','7 hours ago'],['folder','pictures','Create blank','2 minutes ago'],['folder','src','Finished Tenant except for update Apartment - will not conn...','4 minutes ago'],['file','.gitignore','creation','7 hours ago'],['file','mvnw','creation','7 hours ago'],['file','mvnw.cmd','creation','7 hours ago'],['file','pom.xml','Request Table mostly finished - needs images,status update f...','2 hours ago']];
document.querySelector('.filetable tbody').innerHTML=files.map(([i,n,m,t])=>`<tr><td>${icon(i)}<a href="#">${n}</a></td><td class="muted-t">${m}</td><td class="muted-t text-end pe-3">${t}</td></tr>`).join('');
</script>
</body>
</html>
